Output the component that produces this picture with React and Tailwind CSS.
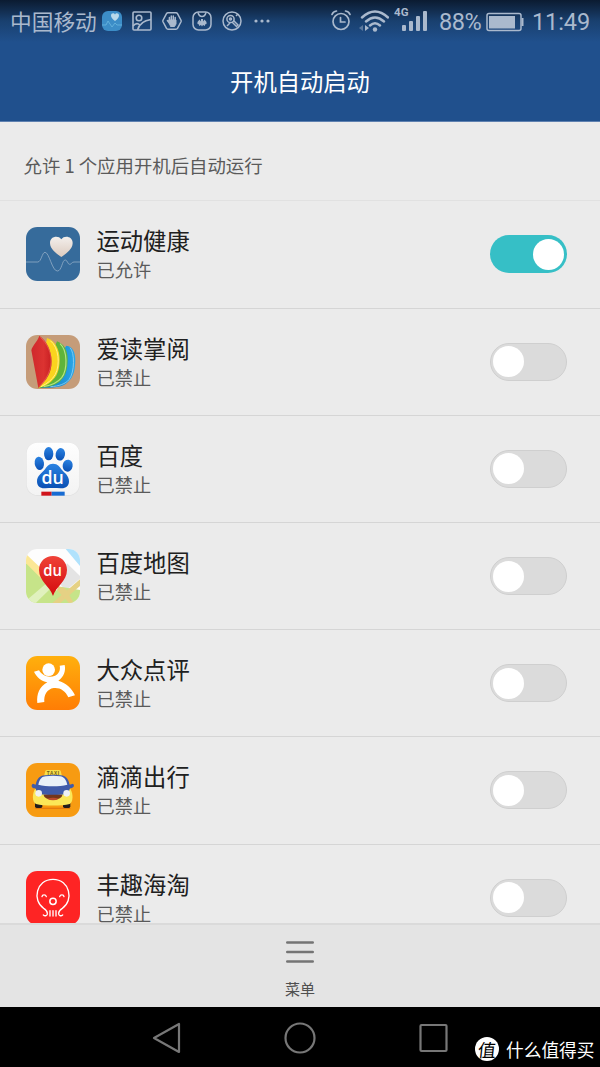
const HealthIcon = () => (
  <svg className="size-[54px] shrink-0" viewBox="0 0 162 162">
    <defs>
      <linearGradient id="heart" x1="0" y1="0" x2="0" y2="1">
        <stop offset="0" stopColor="#f3efec" />
        <stop offset="1" stopColor="#dccbbf" />
      </linearGradient>
    </defs>
    <rect width="162" height="162" rx="34" fill="#366b9b" />
    <path d="M0 105H35C46 105 48 76 57 76C70 76 78 132 94 132C108 132 108 98 118 99C124 99 125 112 131 112C137 112 137 105 144 105H162" fill="none" stroke="#8fabc5" strokeWidth="2.5" />
    <path d="M106 90C96 82 72 68 72 48C72 28 97 24 106 37C115 24 140 28 140 48C140 68 116 82 106 90Z" fill="url(#heart)" />
  </svg>
);

const ReaderIcon = () => (
  <svg className="size-[54px] shrink-0" viewBox="31 29 162 162">
    <defs>
      <linearGradient id="pageRed">
        <stop offset="0" stopColor="#cf292c" />
        <stop offset=".6" stopColor="#dc3331" />
        <stop offset="1" stopColor="#c81f22" />
      </linearGradient>
      <linearGradient id="pageBlue">
        <stop offset="0" stopColor="#0873b9" />
        <stop offset="1" stopColor="#2aa7e8" />
      </linearGradient>
    </defs>
    <rect x="31" y="29" width="162" height="162" rx="34" fill="#c59c79" />
    <path d="M68 188L152 61C172 62 180 84 179 108C178 142 170 162 150 176C130 189 98 187 68 188Z" fill="url(#pageBlue)" />
    <path d="M163 67C177 80 178 140 160 163C150 175 130 183 104 184" fill="none" stroke="#8fd0f3" strokeWidth="2.5" />
    <path d="M68 188L124 48C146 56 156 76 156 102C156 136 148 158 128 172C110 184 88 186 68 188Z" fill="#5fb43a" />
    <path d="M133 55C156 76 156 132 138 157C126 172 108 180 84 184" fill="none" stroke="#b4e384" strokeWidth="3.5" />
    <path d="M68 188L94 38C118 46 132 72 132 102C132 134 124 154 106 169C94 179 82 184 68 188Z" fill="#fad41e" />
    <path d="M104 46C130 66 134 118 119 147C110 163 96 174 76 184" fill="none" stroke="#fff28a" strokeWidth="3" />
    <path d="M68 188L47 75C50 60 65 50 71 31C94 46 108 78 108 108C108 144 92 166 68 188Z" fill="url(#pageRed)" />
    <path d="M74 36C96 56 108 84 106 112C104 142 90 164 71 183" fill="none" stroke="#f08070" strokeWidth="1.5" />
  </svg>
);

const BaiduIcon = () => (
  <svg className="size-[54px] shrink-0" viewBox="31 31 162 162">
    <defs>
      <linearGradient id="paw" x1="0" y1="0" x2="0" y2="1">
        <stop offset="0" stopColor="#2b83e2" />
        <stop offset="1" stopColor="#0a50b4" />
      </linearGradient>
      <linearGradient id="paper" x1="0" y1="0" x2="0" y2="1">
        <stop offset="0" stopColor="#fefefe" />
        <stop offset="1" stopColor="#f3f3f3" />
      </linearGradient>
    </defs>
    <rect x="32" y="33" width="160" height="159" rx="32" fill="#e0e0e0" />
    <rect x="33" y="33" width="158" height="157" rx="32" fill="url(#paper)" />
    <g fill="url(#paw)">
      <ellipse cx="71" cy="95" rx="14" ry="20" transform="rotate(-8 71 95)" />
      <ellipse cx="99" cy="66" rx="14" ry="20" />
      <ellipse cx="134" cy="68" rx="14" ry="19" transform="rotate(12 134 68)" />
      <ellipse cx="156" cy="102" rx="15" ry="18" transform="rotate(10 156 102)" />
      <path d="M112 96C127 96 132 106 139 115C148 125 160 132 160 149C160 164 150 171 135 170C121 169 103 169 89 170C73 171 64 163 64 149C64 133 77 126 86 115C93 106 98 96 112 96Z" />
    </g>
    <text x="111" y="158" textAnchor="middle" textLength="67" lengthAdjust="spacingAndGlyphs" fill="#fff" className="font-['Open_Sans',sans-serif] text-[56px] font-semibold">du</text>
    <path d="M77 180H108V192H77Z" fill="#d0141b" />
    <path d="M108 180H147V192H108Z" fill="#176bd2" />
  </svg>
);

const BaiduMapIcon = () => (
  <svg className="size-[54px] shrink-0" viewBox="31 27 162 162">
    <defs>
      <clipPath id="mapClip">
        <rect x="31" y="27" width="162" height="162" rx="34" />
      </clipPath>
      <linearGradient id="pin" x1="0" y1="0" x2="0" y2="1">
        <stop offset="0" stopColor="#ef4238" />
        <stop offset="1" stopColor="#d40b0d" />
      </linearGradient>
    </defs>
    <g clipPath="url(#mapClip)">
      <rect x="31" y="27" width="162" height="162" fill="#fdfdfd" />
      <path d="M31 60L128 157L96 189H31Z" fill="#c6e489" />
      <path d="M31 42L112 119L98 137L31 70Z" fill="#fbe795" />
      <path d="M150 27H193V78Z" fill="#b0e2fc" />
      <path d="M154 70L193 108V116L150 152L125 122Z" fill="#e4e4e4" />
      <path d="M84 189L135 140L193 150V189Z" fill="#c6e489" />
      <path d="M31 182L90 132L104 146L60 189H31Z" fill="#e0f1be" />
      <path d="M110 189L193 118V138L134 189Z" fill="#e5d184" />
      <path d="M128 138L150 146L174 189H160L124 150Z" fill="#e5d184" />
    </g>
    <path d="M112 168C104 140 70 124 70 90C70 65 89 48 112 48C135 48 154 65 154 90C154 124 120 140 112 168Z" fill="url(#pin)" />
    <text x="111" y="108" textAnchor="middle" textLength="56" lengthAdjust="spacingAndGlyphs" fill="#fff" className="font-['Open_Sans',sans-serif] text-[47px] font-semibold">du</text>
  </svg>
);

const DianpingIcon = () => (
  <svg className="size-[54px] shrink-0" viewBox="31 28 162 162">
    <defs>
      <linearGradient id="orange" x1="0" y1="0" x2="0" y2="1">
        <stop offset="0" stopColor="#ffb00d" />
        <stop offset="1" stopColor="#ff7d05" />
      </linearGradient>
    </defs>
    <rect x="31" y="28" width="162" height="162" rx="34" fill="url(#orange)" />
    <circle cx="99" cy="69" r="19" fill="#fff" />
    <path d="M55 75L70 71C80 88 101 95 118 87C130 81 135 69 132 57L147 55C151 74 144 91 128 102C151 108 169 125 178 146L158 152C149 132 133 122 114 124C94 127 84 145 86 166L65 169C62 142 72 119 95 107C77 103 63 92 55 75Z" fill="#fff" />
  </svg>
);

const DidiIcon = () => (
  <svg className="size-[54px] shrink-0" viewBox="31 27 162 162">
    <rect x="31" y="27" width="162" height="162" rx="34" fill="#f79b12" />
    <path d="M59 161H164V164H59Z" fill="#df700c" />
    <rect x="58" y="140" width="22" height="22" rx="5" fill="#231c1c" />
    <rect x="142" y="140" width="22" height="22" rx="5" fill="#231c1c" />
    <path d="M89 51Q90 48 94 48H130Q134 48 135 51L139 67H85Z" fill="#f7df4b" />
    <text x="112" y="63" textAnchor="middle" textLength="37" fill="#6f5a13" className="font-['Liberation_Sans',sans-serif] text-[14px] font-bold">TAXI</text>
    <path d="M58 105H164C174 121 172 145 162 150C137 156 86 156 61 150C49 143 49 121 58 105Z" fill="#fbe758" />
    <path d="M60 92C65 70 75 65 88 64C103 62 122 62 136 64C149 66 158 73 162 92L172 89C178 95 174 102 163 103L157 119C132 124 90 124 66 119L59 103C47 103 45 93 52 89Z" fill="#405ba9" />
    <path d="M68 92C72 73 80 68 90 67C104 65 120 65 134 67C144 69 151 75 155 92C130 98 94 98 68 92Z" fill="#eaf1f8" />
    <path d="M84 122H140C139 142 85 142 84 122Z" fill="#74361b" />
    <path d="M94 134Q112 128 130 134Q112 143 94 134Z" fill="#bb4b2e" />
    <circle cx="69" cy="118" r="10" fill="#eef1f4" />
    <circle cx="153" cy="118" r="10" fill="#eef1f4" />
  </svg>
);

const FengquIcon = () => (
  <svg className="size-[54px] shrink-0" viewBox="31 33 162 162">
    <rect x="31" y="33" width="162" height="162" rx="34" fill="#fe2424" />
    <g fill="none" stroke="#fff" strokeWidth="4" strokeLinecap="round">
      <path d="M83 165C88 169 96 167 95 160C95 153 92 150 84 145C49 122 61 58 112 58C163 58 175 122 140 145C132 150 129 153 129 160C128 167 136 169 141 165" />
      <path d="M103 152V168M112 152V168M121 152V168" />
      <path d="M79 110C80 103 90 103 92 110M132 110C134 103 144 103 145 110" />
      <circle cx="112" cy="124" r="9.5" strokeWidth="4.5" />
    </g>
  </svg>
);

const apps = [
  { name: "运动健康", Icon: HealthIcon, enabled: true },
  { name: "爱读掌阅", Icon: ReaderIcon, enabled: false },
  { name: "百度", Icon: BaiduIcon, enabled: false },
  { name: "百度地图", Icon: BaiduMapIcon, enabled: false },
  { name: "大众点评", Icon: DianpingIcon, enabled: false },
  { name: "滴滴出行", Icon: DidiIcon, enabled: false },
  { name: "丰趣海淘", Icon: FengquIcon, enabled: false },
];

const Toggle = ({ on }) => (
  <div
    className={
      on
        ? "flex h-[38px] w-[77px] items-center justify-end rounded-full bg-[#36bfc6] px-[3px]"
        : "flex h-[38px] w-[77px] items-center rounded-full border border-[#cfcfcf] bg-[#dbdbdb] px-[2px]"
    }
  >
    <div className="size-[31px] rounded-full bg-white"></div>
  </div>
);

const AppRow = ({ name, Icon, enabled }) => (
  <div className="flex h-[107.2px] shrink-0 items-center border-b border-[#d5d5d5] pr-[33px] pl-[26px]">
    <Icon />
    <div className="ml-[16.5px] flex-1 pt-px">
      <div className="text-[23.3px] leading-[30px] text-[#202020]">{name}</div>
      <div className="text-[18.2px] leading-[29px] text-[#5a5a5a]">
        {enabled ? "已允许" : "已禁止"}
      </div>
    </div>
    <Toggle on={enabled} />
  </div>
);

const StatusBar = () => (
  <div className="flex h-[42px] items-center bg-linear-to-b from-[#0b1b31] via-[#19406f] to-[#20508d] pr-[10px] pl-[10px] text-[#aab9cd]">
    <span className="text-[21.7px] leading-[42px]">中国移动</span>
    <svg className="ml-[5px] size-5" viewBox="0 0 20 20">
      <rect width="20" height="20" rx="6" fill="#3c8dc7" />
      <path d="M0 14H4L6 10L10 16L13 12L15 14H20" fill="none" stroke="#69b8e0" strokeWidth=".8" />
      <path d="M13 10C10 8 9 6 9 4.500C9 2 12 1.500 13 3.500C14 1.500 17 2 17 4.500C17 6 16 8 13 10Z" fill="#b9d9ea" />
    </svg>
    <svg className="ml-[10px] size-5" viewBox="0 0 20 20" fill="none" stroke="currentColor" strokeWidth="1.6">
      <rect x="1" y="1" width="18" height="18" rx="1" />
      <circle cx="7" cy="7" r="2.8" />
      <path d="M1 15Q4.500 11 8 14M5.500 19Q8 10 19 8.500" />
    </svg>
    <svg className="ml-[10px] size-5" viewBox="0 0 20 20" fill="none" stroke="currentColor">
      <path d="M6 1.800H14Q15 1.800 15.500 2.600L19 9.200Q19.300 10 19 10.800L15.500 17.400Q15 18.200 14 18.200H6Q5 18.200 4.500 17.400L1 10.800Q.7 10 1 9.200L4.500 2.600Q5 1.800 6 1.800Z" strokeWidth="1.500" />
      <path d="M7.400 10V6.500M9.300 9V5M11.300 9V5M13.200 10V6.500M5.400 9.500L8 13" strokeWidth="1.500" strokeLinecap="round" />
      <path d="M6.700 9H14V13L12.500 15.500H8.500Z" fill="currentColor" />
    </svg>
    <svg className="ml-[10px] size-5" viewBox="0 0 20 20" fill="none" stroke="currentColor" strokeWidth="1.5">
      <rect x="1" y="1" width="18" height="18" rx="5.500" />
      <path d="M6 1.500Q7 5.500 10 5.500T14 1.500" />
      <path d="M5.500 11L7.500 8.500L9 10.500V8H11V10.500L12.500 8.500L14.500 11V13L13 13.500V15L11 14L10 15.500L9 14L7 15V13.500L5.500 13Z" fill="currentColor" stroke="none" />
    </svg>
    <svg className="ml-[10px] size-5" viewBox="0 0 20 20" fill="none" stroke="currentColor" strokeWidth="1.5">
      <circle cx="10" cy="10" r="9" />
      <circle cx="8.500" cy="8" r="3.600" />
      <circle cx="8.500" cy="8" r="1" />
      <path d="M10 11L14.500 15.500L16 14L11.500 9.500M5 15L8 12M14 5L16 3" />
    </svg>
    <svg className="ml-[12px] h-1 w-4" viewBox="0 0 16 4" fill="currentColor">
      <circle cx="2" cy="2" r="1.600" />
      <circle cx="8" cy="2" r="1.600" />
      <circle cx="14" cy="2" r="1.600" />
    </svg>
    <div className="ml-auto flex items-center">
      <svg className="mb-[2px] h-[22px] w-5" viewBox="0 0 20 22" fill="none" stroke="currentColor" strokeWidth="1.7" strokeLinecap="round">
        <circle cx="10" cy="12.500" r="8" />
        <path d="M9.500 8.500V13H14M1 5.500Q2 2.500 5.500 2M19 5.500Q18 2.500 14.500 2" />
      </svg>
      <svg className="mb-[1px] ml-[8px] h-[22px] w-[30px]" viewBox="0 0 30 22" fill="none" stroke="currentColor" strokeWidth="2.4" strokeLinecap="round">
        <path d="M3 7.500Q16 -4.500 29 7.500M7 11.500Q16 3.500 25 11.500M11 15.500Q16 11 21 15.500" />
        <circle cx="16" cy="19.500" r="2.200" fill="currentColor" stroke="none" />
        <path d="M4 15V21L0 18Z" fill="currentColor" stroke="none" opacity=".45" />
        <path d="M6 15V21L10 18Z" fill="currentColor" stroke="none" />
      </svg>
      <svg className="mb-[4px] ml-[5px] h-[26px] w-[33px]" viewBox="0 0 33 26" fill="currentColor">
        <text x="0" y="9.500" textLength="14.500" className="font-['Roboto',sans-serif] text-[11.500px] font-bold">4G</text>
        <rect x="8" y="19" width="4" height="6" rx="1" />
        <rect x="15" y="15" width="4" height="10" rx="1" />
        <rect x="22" y="10" width="4" height="15" rx="1" />
        <rect x="29" y="5" width="4" height="20" rx="1" />
      </svg>
      <span className="ml-[12px] w-[45px] pt-[3px] font-['Roboto',sans-serif] text-[23.5px] tracking-[-0.4px]">88%</span>
      <svg className="mt-[1px] ml-[2px] h-5 w-[38px]" viewBox="0 0 38 20" fill="none" stroke="currentColor" strokeWidth="1.5">
        <rect x="1" y="1.500" width="34" height="17" rx="2" />
        <rect x="3" y="4" width="26" height="12.500" fill="currentColor" stroke="none" />
        <path d="M36.500 6V14" strokeWidth="2" />
      </svg>
      <span className="ml-[8px] w-[58px] pt-[3px] font-['Roboto',sans-serif] text-[23.5px] tracking-[-0.1px]">11:49</span>
    </div>
  </div>
);

const NavBar = () => (
  <div className="flex h-[60px] shrink-0 items-center bg-black text-[#777]">
    <svg className="mt-[1px] ml-[152px] size-8" viewBox="0 0 32 32" fill="none" stroke="currentColor" strokeWidth="2.2" strokeLinejoin="round">
      <path d="M2 16L27 2V30Z" />
    </svg>
    <svg className="mt-[1px] ml-[100px] size-8" viewBox="0 0 32 32" fill="none" stroke="currentColor" strokeWidth="2.2">
      <circle cx="16" cy="16" r="14.500" />
    </svg>
    <svg className="mt-[1px] ml-[101px] size-8" viewBox="0 0 32 32" fill="none" stroke="currentColor" strokeWidth="2.2">
      <rect x="3.500" y="3" width="26" height="26" rx="1" />
    </svg>
    <div className="mt-[23px] ml-[26px] flex items-center text-white">
      <div className="flex size-6 items-center justify-center rounded-full bg-white text-[18px] leading-none text-black">
        <span className="-skew-x-6">值</span>
      </div>
      <span className="ml-[7px] text-[17.700px] leading-6 whitespace-nowrap">什么值得买</span>
    </div>
  </div>
);

const App = () => {
  return (
    <div className="flex h-[1067px] w-[600px] flex-col overflow-hidden bg-[#ebebeb] font-['Noto_Sans_CJK_SC',sans-serif]">
      <header className="h-[122px] shrink-0 border-b border-[#5f81b0] bg-[#20508d]">
        <StatusBar />
        <h1 className="h-[79px] text-center text-[23.3px] leading-[79px] text-white">开机自动启动</h1>
      </header>
      <main className="flex min-h-0 flex-1 flex-col overflow-hidden">
        <div className="h-[79.4px] shrink-0 border-b border-[#e1e1e1] pt-[28px] pl-[23.5px] text-[18.4px] leading-[30px] text-[#5a5a5a]">
          允许 1 个应用开机后自动运行
        </div>
        {apps.map((app) => (
          <AppRow key={app.name} {...app} />
        ))}
      </main>
      <div className="flex h-[84px] shrink-0 flex-col items-center border-t-2 border-[#dadada] bg-[#e4e4e4] pt-4">
        <svg className="h-6 w-7" viewBox="0 0 28 24" fill="none" stroke="#747474" strokeWidth="2.6" strokeLinecap="round">
          <path d="M1.300 1.500H26.700M1.300 11H26.700M1.300 20.500H26.700" />
        </svg>
        <span className="mt-[12px] text-[15px] leading-6 text-[#505050]">菜单</span>
      </div>
      <NavBar />
    </div>
  );
};

export default App;
